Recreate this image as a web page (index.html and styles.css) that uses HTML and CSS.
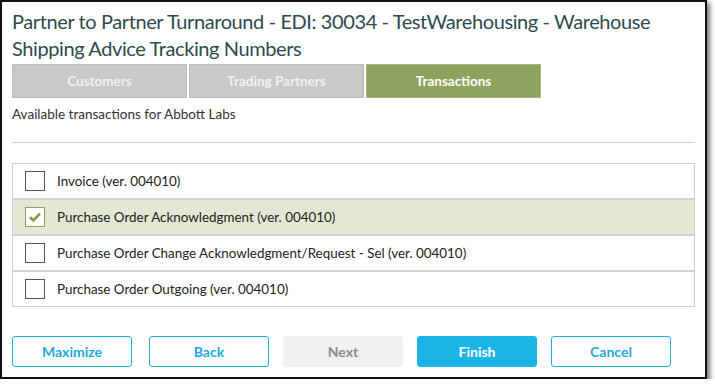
FILE: index.html
```html
<!DOCTYPE html>
<html lang="en">
<head>
  <meta charset="UTF-8">
  <title>Partner to Partner Turnaround</title>
  <link rel="stylesheet" href="styles.css">
</head>
<body>
  <div class="window">
    <h1 class="title">Partner to Partner Turnaround - EDI: 30034 - TestWarehousing - Warehouse Shipping Advice Tracking Numbers</h1>

    <!-- Wizard steps -->
    <div class="tabs">
      <div class="tab">Customers</div>
      <div class="tab">Trading Partners</div>
      <div class="tab active">Transactions</div>
    </div>
    <p class="subtitle">Available transactions for Abbott Labs</p>
    <hr class="divider">

    <!-- Transaction list -->
    <ul class="list">
      <li class="row">
        <span class="check"></span>
        <span>Invoice (ver. 004010)</span>
      </li>
      <li class="row selected">
        <span class="check">
          <svg width="12" height="10" viewBox="0 0 12 10"><path d="M1 5.2 L4.4 8.4 L11 1.6" fill="none" stroke="#7e9f4a" stroke-width="2.6"/></svg>
        </span>
        <span>Purchase Order Acknowledgment (ver. 004010)</span>
      </li>
      <li class="row">
        <span class="check"></span>
        <span>Purchase Order Change Acknowledgment/Request - Sel (ver. 004010)</span>
      </li>
      <li class="row">
        <span class="check"></span>
        <span>Purchase Order Outgoing (ver. 004010)</span>
      </li>
    </ul>

    <div class="buttons">
      <button class="btn maximize">Maximize</button>
      <button class="btn">Back</button>
      <button class="btn disabled">Next</button>
      <button class="btn primary">Finish</button>
      <button class="btn">Cancel</button>
    </div>
  </div>
</body>
</html>
```

FILE: styles.css
```css
/* Global Styles */
body {
  margin: 0;
  padding: 0;
  background: #fff;
  font-family: 'Lato', sans-serif;
  color: #333;
}
.window {
  width: 683px;
  height: 375px;
  padding: 0 10px;
  border: 2px solid #111;
  box-shadow: 3px 3px 5px rgba(0,0,0,0.55);
  background: #fff;
}
.title {
  margin: 6px 0 2px;
  font-size: 20px;
  font-weight: 400;
  line-height: 27px;
  letter-spacing: -0.4px;
  color: #2e4a4f;
}
.tabs {
  display: flex;
  gap: 2px;
}
.tab {
  width: 173px;
  height: 32px;
  line-height: 32px;
  text-align: center;
  background: #c9c9c9;
  border: 1px solid #bcbcbc;
  color: #f2f2f2;
  font-size: 13.5px;
  font-weight: 700;
}
.tab.active {
  background: #8ea45e;
  border-color: #a7b887;
  color: #fff;
}
.subtitle {
  margin: 8px 0 0;
  font-size: 13.5px;
  color: #333;
}
.divider {
  margin: 20px 0 20px;
  border: none;
  border-top: 1px solid #d0d0d0;
}
.list {
  list-style: none;
  margin: 0;
  padding: 0;
  border: 1px solid #cfcfcf;
}
.row {
  display: flex;
  align-items: center;
  gap: 12px;
  height: 34px;
  padding-left: 12px;
  border-bottom: 2px solid #d2d2d2;
  font-size: 13.4px;
  color: #222;
}
.row:last-child {
  border-bottom: none;
}
.row.selected {
  background: #e3e8d4;
}
.check {
  width: 18px;
  height: 18px;
  border: 1px solid #555;
  background: #fff;
  display: flex;
  align-items: center;
  justify-content: center;
}
.selected .check {
  border-color: #8aa35c;
}
.buttons {
  display: flex;
  gap: 14px;
  margin-top: 29px;
}
.btn {
  width: 120px;
  height: 31px;
  border: 1px solid #1eb0e4;
  border-radius: 3px;
  background: #fff;
  color: #1ba9df;
  font-family: 'Lato', sans-serif;
  font-size: 14px;
  font-weight: 700;
  cursor: pointer;
}
.btn.maximize {
  margin-right: 3px;
}
.btn.disabled {
  border-color: #f0f0f0;
  background: #f0f0f0;
  color: #8a8a8a;
}
.btn.primary {
  background: #1ab4e6;
  border-color: #1ab4e6;
  color: #fff;
}
```
